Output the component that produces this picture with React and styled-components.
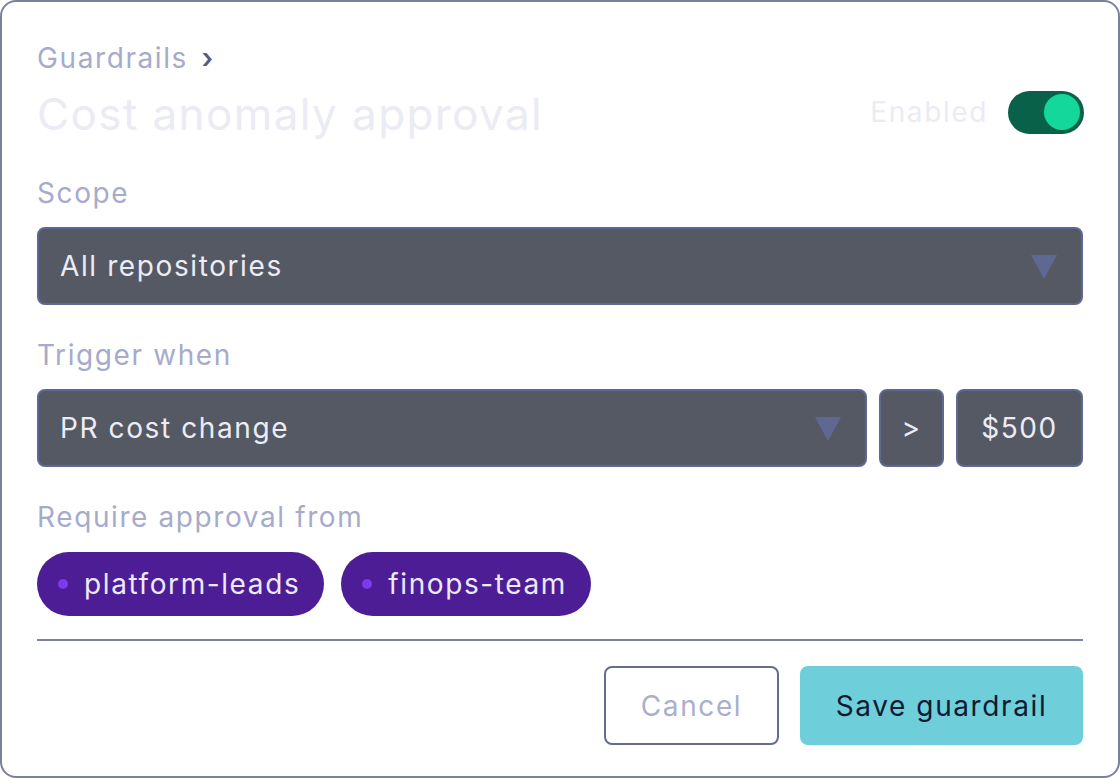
import styled, { createGlobalStyle } from "styled-components"

const GlobalStyle = createGlobalStyle`
  html, body {
    margin: 0;
    padding: 0;
    background: #ffffff;
  }
  * {
    box-sizing: border-box;
  }
`

const approvers = ['platform-leads', 'finops-team']

const Caret = () => (
  <svg width="26" height="24" viewBox="0 0 26 24">
    <path d="M0 0 L26 0 L13 24 Z" fill="#5f6893" />
  </svg>
)

const App = () => {
  return (
    <>
      <GlobalStyle />
      <Card>
        <Crumb>
          Guardrails <span className="chev">›</span>
        </Crumb>
        <TitleRow>
          <h1>Cost anomaly approval</h1>
          <Status>
            <span>Enabled</span>
            <Toggle $on>
              <span className="knob" />
            </Toggle>
          </Status>
        </TitleRow>

        <Label $first>Scope</Label>
        <Field>
          <span>All repositories</span>
          <Caret />
        </Field>

        <Label>Trigger when</Label>
        <Row>
          <Field $grow>
            <span>PR cost change</span>
            <Caret />
          </Field>
          <Box>&gt;</Box>
          <Box $wide>$500</Box>
        </Row>

        <Label>Require approval from</Label>
        <Chips>
          {approvers.map((name) => (
            <Chip key={name}>
              <span className="dot" />
              {name}
            </Chip>
          ))}
        </Chips>

        <Divider />

        <Actions>
          <Button>Cancel</Button>
          <Button $primary>Save guardrail</Button>
        </Actions>
      </Card>
    </>
  )
}

const Card = styled.div`
  width: 1120px;
  height: 778px;
  border: 2px solid #7a80a0;
  border-radius: 16px;
  padding: 39px 35px 0 35px;
  font-family: Inter, "Noto Sans", sans-serif;
  letter-spacing: 1.6px;
  display: flex;
  flex-direction: column;
`

const Crumb = styled.div`
  font-size: 28px;
  line-height: 34px;
  color: #a6abcb;

  .chev {
    color: #535c86;
    font-weight: 600;
    margin-left: 4px;
  }
`

const TitleRow = styled.div`
  display: flex;
  justify-content: space-between;
  align-items: center;
  margin-top: 13px;

  h1 {
    margin: 0;
    font-size: 44px;
    line-height: 52px;
    font-weight: 400;
    letter-spacing: 1.4px;
    color: #ebebf4;
  }
`

const Status = styled.div`
  display: flex;
  align-items: center;
  gap: 20px;
  font-size: 28px;
  color: #ebebf4;
  margin-right: -1px;
  margin-top: -4px;
`

const Toggle = styled.div`
  width: 76px;
  height: 43px;
  border-radius: 22px;
  background: ${({ $on }) => ($on ? '#0a6149' : '#545964')};
  display: flex;
  align-items: center;
  justify-content: ${({ $on }) => ($on ? 'flex-end' : 'flex-start')};
  padding: 0 4px;

  .knob {
    width: 36px;
    height: 36px;
    border-radius: 50%;
    background: #14d89b;
  }
`

const Label = styled.div`
  font-size: 28px;
  line-height: 34px;
  color: #a6abcb;
  margin-top: ${({ $first }) => ($first ? '36px' : '33px')};
  margin-bottom: 17px;
`

const Field = styled.div`
  height: 78px;
  flex: ${({ $grow }) => ($grow ? 1 : 'none')};
  background: #545964;
  border: 2px solid #5f6893;
  border-radius: 8px;
  display: flex;
  align-items: center;
  justify-content: space-between;
  padding: 0 24px 0 21px;
  font-size: 28px;
  color: #ececf4;

  svg {
    margin-top: 2px;
  }
`

const Row = styled.div`
  display: flex;
  gap: 12px;
`

const Box = styled.div`
  height: 78px;
  width: ${({ $wide }) => ($wide ? '127px' : '65px')};
  background: #545964;
  border: 2px solid #5f6893;
  border-radius: 8px;
  display: flex;
  align-items: center;
  justify-content: center;
  font-size: 28px;
  color: #ececf4;
`

const Chips = styled.div`
  display: flex;
  gap: 17px;
  margin-top: 1px;
`

const Chip = styled.div`
  height: 64px;
  border-radius: 32px;
  background: #4c1d95;
  color: #ede9fe;
  font-size: 28px;
  display: flex;
  align-items: center;
  gap: 16px;
  padding: 0 24px 0 21px;

  .dot {
    width: 10px;
    height: 10px;
    border-radius: 50%;
    background: #7c3aed;
  }
`

const Divider = styled.hr`
  border: none;
  height: 2px;
  background: #7a80a0;
  margin: 23px 0 0 0;
  width: 100%;
`

const Actions = styled.div`
  display: flex;
  justify-content: flex-end;
  gap: 21px;
  margin-top: 25px;
`

const Button = styled.button`
  height: 79px;
  padding: 0;
  width: ${({ $primary }) => ($primary ? '283px' : '175px')};
  border-radius: 8px;
  font-family: Inter, "Noto Sans", sans-serif;
  font-size: 28px;
  letter-spacing: 1.6px;
  border: ${({ $primary }) => ($primary ? 'none' : '2px solid #646c90')};
  background: ${({ $primary }) => ($primary ? '#6ecfda' : '#ffffff')};
  color: ${({ $primary }) => ($primary ? '#0f1a33' : '#aab0cc')};
`

export default App
